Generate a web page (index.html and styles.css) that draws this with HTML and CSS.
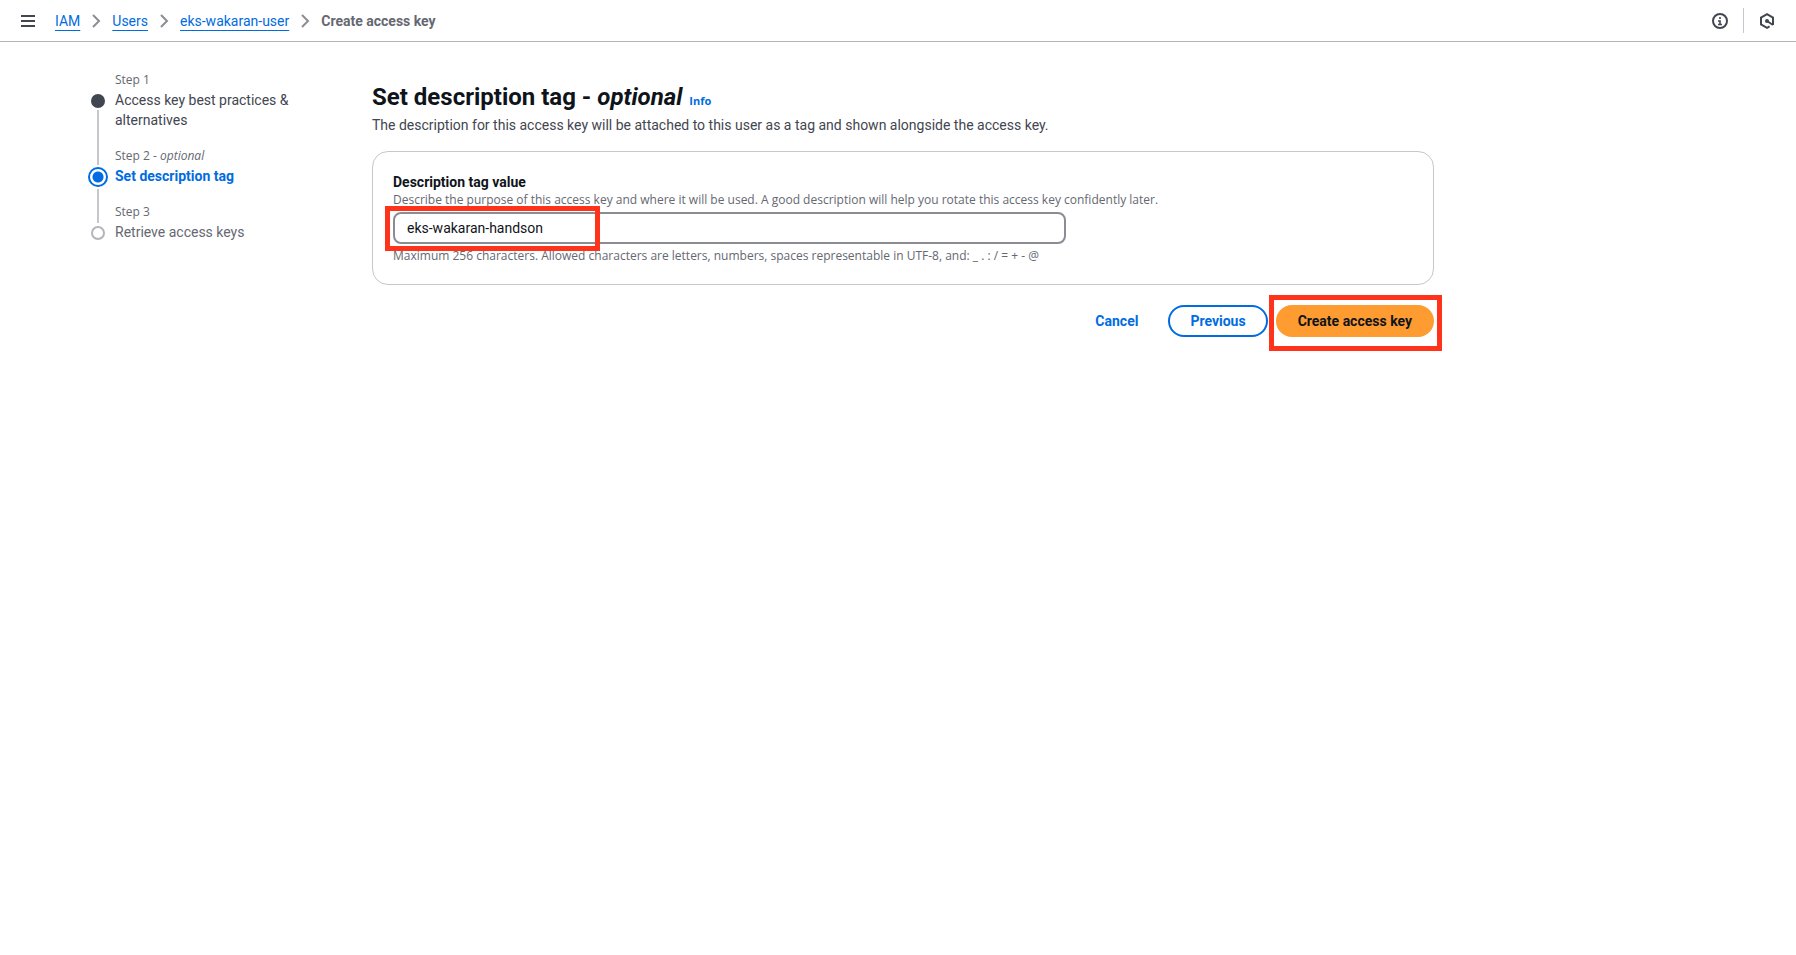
FILE: index.html
```html
<!DOCTYPE html>
<html lang="en">
<head>
<meta charset="utf-8">
<title>Create access key | IAM</title>
<link rel="stylesheet" href="styles.css">
</head>
<body>
<header class="topbar">
  <button class="icon-button" type="button" aria-label="Open navigation">
    <svg width="14" height="12" viewBox="0 0 14 12" stroke="currentColor" stroke-width="2"><path d="M0 1h14M0 6h14M0 11h14"/></svg>
  </button>
  <nav class="breadcrumbs" aria-label="Breadcrumbs">
    <a href="#iam">IAM</a>
    <svg class="chevron" width="16" height="16" viewBox="0 0 16 16"><path d="M5 2l6 6-6 6"/></svg>
    <a href="#users">Users</a>
    <svg class="chevron" width="16" height="16" viewBox="0 0 16 16"><path d="M5 2l6 6-6 6"/></svg>
    <a href="#user">eks-wakaran-user</a>
    <svg class="chevron" width="16" height="16" viewBox="0 0 16 16"><path d="M5 2l6 6-6 6"/></svg>
    <span class="current">Create access key</span>
  </nav>
  <div class="tools">
    <button class="icon-button" type="button" aria-label="Help panel">
      <svg width="16" height="16" viewBox="0 0 16 16" fill="none" stroke="currentColor" stroke-width="2"><circle cx="8" cy="8" r="7"/><path d="M8 4v2M6 8h2v3M6 11.500h4" stroke-width="1.600"/></svg>
    </button>
    <span class="divider"></span>
    <button class="icon-button" type="button" aria-label="Diagnostics">
      <svg width="16" height="16" viewBox="0 0 16 16" fill="none" stroke="currentColor" stroke-width="2"><path d="M14 12V4.600L8 1.200 2 4.600v6.800l6 3.400 2.600-1.500M8 8l6 4"/><circle cx="8" cy="8" r="2" fill="currentColor" stroke="none"/></svg>
    </button>
  </div>
</header>
<div class="wizard">
  <ol class="steps">
    <li class="step done">
      <span class="marker"></span>
      <span class="step-label">Step 1</span>
      <span class="step-title">Access key best practices &amp; alternatives</span>
    </li>
    <li class="step active" aria-current="step">
      <span class="marker"></span>
      <span class="step-label">Step 2 - <em>optional</em></span>
      <span class="step-title">Set description tag</span>
    </li>
    <li class="step">
      <span class="marker"></span>
      <span class="step-label">Step 3</span>
      <span class="step-title">Retrieve access keys</span>
    </li>
  </ol>
  <main class="content">
    <div class="heading">
      <h1>Set description tag - <em>optional</em></h1>
      <a class="info" href="#info">Info</a>
    </div>
    <p class="intro">The description for this access key will be attached to this user as a tag and shown alongside the access key.</p>
    <form>
      <section class="card">
        <label for="tag">Description tag value</label>
        <p class="hint" id="hint">Describe the purpose of this access key and where it will be used. A good description will help you rotate this access key confidently later.</p>
        <div class="field">
          <input id="tag" type="text" value="eks-wakaran-handson" aria-describedby="hint limit">
          <span class="mark mark-field"></span>
        </div>
        <p class="hint" id="limit">Maximum 256 characters. Allowed characters are letters, numbers, spaces representable in UTF-8, and: _ . : / = + - @</p>
      </section>
      <div class="actions">
        <button class="button link" type="button">Cancel</button>
        <button class="button" type="button">Previous</button>
        <div class="marked">
          <button class="button primary" type="submit">Create access key</button>
          <span class="mark mark-button"></span>
        </div>
      </div>
    </form>
  </main>
</div>
</body>
</html>
```
FILE: styles.css
```css
* { box-sizing: border-box; }
body {
  margin: 0;
  background: #fff;
  color: #0f141a;
  font: 14px/20px Roboto, "Noto Sans", sans-serif;
}
button, input { font: inherit; color: inherit; }
a { color: #006ce0; text-decoration: none; }
p, h1, ol { margin: 0; padding: 0; }

.topbar {
  display: flex;
  align-items: center;
  height: 42px;
  padding: 0 21px 0 20px;
  border-bottom: 1px solid #b4b4bb;
}
.icon-button {
  display: flex;
  justify-content: center;
  width: 16px;
  padding: 0;
  border: 0;
  background: none;
  color: #424650;
}
.breadcrumbs { display: flex; align-items: center; gap: 8px; margin-left: 19px; }
.breadcrumbs a { line-height: 20px; text-decoration: underline; text-decoration-thickness: 1px; text-underline-offset: 4px; }
.chevron { fill: none; stroke: #8c8c94; stroke-width: 2; }
.current { color: #656871; font-weight: 700; }
.tools { display: flex; align-items: center; gap: 15px; margin-left: auto; }
.divider { width: 1px; height: 25px; background: #c6c6cd; }

.wizard {
  display: grid;
  grid-template-columns: 204px minmax(0, 1062px);
  column-gap: 80px;
  padding: 30px 40px 40px 88px;
}
.steps { list-style: none; }
.step {
  display: grid;
  grid-template-columns: 20px 1fr;
  grid-template-rows: 16px auto;
  gap: 2px 7px;
  position: relative;
  padding-bottom: 18px;
  color: #656871;
}
.step-label { grid-column: 2; font: 12px/16px "Open Sans", sans-serif; }
.step-title { grid-column: 2; }
.done .step-title { color: #424650; }
.active .step-title { color: #006ce0; font-weight: 700; }
.marker {
  grid-area: 2 / 1;
  justify-self: center;
  width: 14px;
  height: 14px;
  margin-top: 4px;
  border: 2px solid #b4b4bb;
  border-radius: 50%;
}
.done .marker { background: #424650; border-color: #424650; }
.active .marker {
  width: 20px;
  height: 20px;
  margin: 1px 0 -1px;
  border-color: #006ce0;
  background: radial-gradient(circle, #006ce0 5px, #fff 6px);
}
/* Connector between one marker and the next */
.step:not(:last-child)::after {
  content: "";
  position: absolute;
  left: 9px;
  top: 38px;
  bottom: -17px;
  width: 2px;
  background: #c6c6cd;
}
.step.active::after { top: 41px; bottom: -19px; }

.content { padding-top: 10px; }
.heading { display: flex; align-items: baseline; gap: 7px; }
h1 { font-size: 24px; line-height: 30px; }
.info { font: 700 11px/16px "Open Sans", sans-serif; }
.intro { margin: 3px 0 16px; color: #424650; }
.card {
  padding: 20px;
  border: 1px solid #c6c6cd;
  border-radius: 16px;
}
.card label { display: block; font-weight: 700; }
.hint { color: #656871; font: 12px/16px "Open Sans", sans-serif; }
.field { position: relative; width: 66%; margin: 4px 0; }
.field input {
  display: block;
  width: 100%;
  height: 32px;
  padding: 4px 12px;
  border: 2px solid #8c8c94;
  border-radius: 8px;
  background: #fff;
}
.actions { display: flex; justify-content: flex-end; gap: 8px; margin-top: 20px; }
.button {
  height: 32px;
  padding: 4px 20px;
  border: 2px solid #006ce0;
  border-radius: 20px;
  background: #fff;
  color: #006ce0;
  font-weight: 700;
}
.button.link { border-color: transparent; }
.button.primary { border-color: #fe9b31; background: #fe9b31; color: #0f141a; }
.marked { position: relative; }
.mark { position: absolute; border: 5px solid #ff321c; pointer-events: none; }
.mark-field { left: -8px; top: -6px; width: 215px; height: 45px; }
.mark-button { inset: -10px -8px -14px -7px; }
```
